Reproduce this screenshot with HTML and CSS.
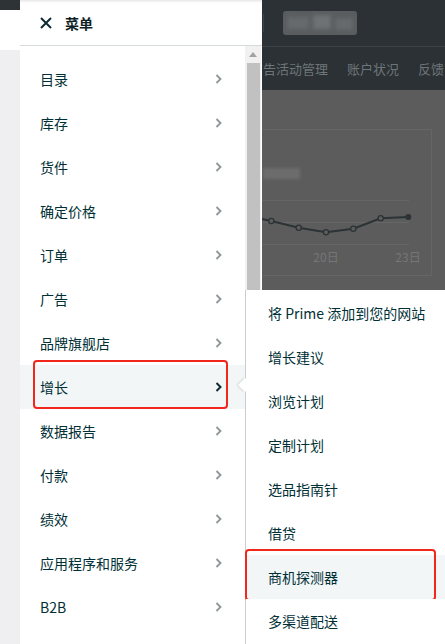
FILE: index.html
```html
<!DOCTYPE html>
<html lang="zh-CN">
<head>
<meta charset="utf-8">
<title>菜单</title>
<link rel="stylesheet" href="styles.css">
</head>
<body>
<div class="page">
  <div class="edge">
    <div class="edge-top"></div>
    <div class="edge-head"></div>
    <div class="edge-body"></div>
  </div>

  <aside class="drawer">
    <div class="drawer-head">
      <svg class="close" width="12" height="12" viewBox="0 0 12 12"><path d="M1 1 L11 11 M11 1 L1 11" stroke="#0f2a33" stroke-width="2" fill="none"/></svg>
      <span class="drawer-title">菜单</span>
    </div>
    <div class="drawer-body">
      <ul class="menu">
        <li class="menu-item"><span>目录</span><svg class="chev" width="7" height="10" viewBox="0 0 7 10"><polyline points="1.5,1 5.5,5 1.5,9"/></svg></li>
        <li class="menu-item"><span>库存</span><svg class="chev" width="7" height="10" viewBox="0 0 7 10"><polyline points="1.5,1 5.5,5 1.5,9"/></svg></li>
        <li class="menu-item"><span>货件</span><svg class="chev" width="7" height="10" viewBox="0 0 7 10"><polyline points="1.5,1 5.5,5 1.5,9"/></svg></li>
        <li class="menu-item"><span>确定价格</span><svg class="chev" width="7" height="10" viewBox="0 0 7 10"><polyline points="1.5,1 5.5,5 1.5,9"/></svg></li>
        <li class="menu-item"><span>订单</span><svg class="chev" width="7" height="10" viewBox="0 0 7 10"><polyline points="1.5,1 5.5,5 1.5,9"/></svg></li>
        <li class="menu-item"><span>广告</span><svg class="chev" width="7" height="10" viewBox="0 0 7 10"><polyline points="1.5,1 5.5,5 1.5,9"/></svg></li>
        <li class="menu-item"><span>品牌旗舰店</span><svg class="chev" width="7" height="10" viewBox="0 0 7 10"><polyline points="1.5,1 5.5,5 1.5,9"/></svg></li>
        <li class="menu-item active"><span>增长</span><svg class="chev" width="7" height="10" viewBox="0 0 7 10"><polyline points="1.5,1 5.5,5 1.5,9"/></svg><span class="mark mark-main"></span></li>
        <li class="menu-item"><span>数据报告</span><svg class="chev" width="7" height="10" viewBox="0 0 7 10"><polyline points="1.5,1 5.5,5 1.5,9"/></svg></li>
        <li class="menu-item"><span>付款</span><svg class="chev" width="7" height="10" viewBox="0 0 7 10"><polyline points="1.5,1 5.5,5 1.5,9"/></svg></li>
        <li class="menu-item"><span>绩效</span><svg class="chev" width="7" height="10" viewBox="0 0 7 10"><polyline points="1.5,1 5.5,5 1.5,9"/></svg></li>
        <li class="menu-item"><span>应用程序和服务</span><svg class="chev" width="7" height="10" viewBox="0 0 7 10"><polyline points="1.5,1 5.5,5 1.5,9"/></svg></li>
        <li class="menu-item"><span>B2B</span><svg class="chev" width="7" height="10" viewBox="0 0 7 10"><polyline points="1.5,1 5.5,5 1.5,9"/></svg></li>
      </ul>
      <div class="scrollbar">
        <div class="sb-arrow"><svg width="8" height="5" viewBox="0 0 8 5"><polygon points="0,5 4,0 8,5" fill="#a3a3a3"/></svg></div>
        <div class="sb-thumb"></div>
      </div>
    </div>
  </aside>

  <main class="backdrop">
    <div class="bd-head">
      <span class="bd-sep"></span>
      <div class="bd-logo"><span class="blob b1"></span><span class="blob b2"></span><span class="blob b3"></span></div>
    </div>
    <nav class="bd-nav">
      <span class="bd-link first">广告活动管理</span>
      <span class="bd-link">账户状况</span>
      <span class="bd-link">反馈</span>
    </nav>
    <div class="bd-content">
      <svg class="chart" width="183" height="554" viewBox="0 0 183 554">
        <defs><filter id="blur" x="-20%" y="-50%" width="140%" height="200%"><feGaussianBlur stdDeviation="1.6"/></filter></defs>
        <rect x="-10" y="39.5" width="179.5" height="146" fill="none" stroke="#656565"/>
        <rect x="1" y="78" width="37" height="11" fill="#6c6c6c" filter="url(#blur)"/>
        <line x1="0" y1="110.5" x2="147" y2="110.5" stroke="#666"/>
        <line x1="0" y1="132.5" x2="147" y2="132.5" stroke="#666"/>
        <line x1="0" y1="154.5" x2="147" y2="154.5" stroke="#666"/>
        <polyline points="-2,128.5 9.3,131 36.7,137.7 64,142.3 91.3,138.7 118.7,128.3 146.3,127" fill="none" stroke="#2c3335" stroke-width="2"/>
        <circle cx="9.3" cy="131" r="2.6" fill="#5c5c5c" stroke="#2c3335" stroke-width="1.3"/>
        <circle cx="36.7" cy="137.7" r="2.6" fill="#5c5c5c" stroke="#2c3335" stroke-width="1.3"/>
        <circle cx="64" cy="142.3" r="2.6" fill="#5c5c5c" stroke="#2c3335" stroke-width="1.3"/>
        <circle cx="91.3" cy="138.7" r="2.6" fill="#5c5c5c" stroke="#2c3335" stroke-width="1.3"/>
        <circle cx="118.7" cy="128.3" r="2.6" fill="#5c5c5c" stroke="#2c3335" stroke-width="1.3"/>
        <circle cx="146.3" cy="127" r="3" fill="#2c3335"/>
        <text x="64" y="172" class="axis">20日</text>
        <text x="146" y="172" class="axis">23日</text>
      </svg>
    </div>
  </main>

  <div class="submenu">
    <span class="caret"></span>
    <ul class="sub-list">
      <li class="sub-item">将 Prime 添加到您的网站</li>
      <li class="sub-item">增长建议</li>
      <li class="sub-item">浏览计划</li>
      <li class="sub-item">定制计划</li>
      <li class="sub-item">选品指南针</li>
      <li class="sub-item">借贷</li>
      <li class="sub-item active">商机探测器<span class="mark mark-sub"></span></li>
      <li class="sub-item">多渠道配送</li>
    </ul>
  </div>
</div>
</body>
</html>
```

FILE: styles.css
```css
* { box-sizing: border-box; }

html, body {
  margin: 0;
  padding: 0;
  width: 445px;
  height: 644px;
  overflow: hidden;
  font-family: "Noto Sans CJK SC", "Noto Sans", "Liberation Sans", sans-serif;
  color: #002f36;
}

.page {
  position: relative;
  display: flex;
  width: 445px;
  height: 644px;
  overflow: hidden;
}

/* left page strip */
.edge {
  width: 20px;
  display: flex;
  flex-direction: column;
  flex-shrink: 0;
}
.edge-top { height: 10px; background: #2e3336; }
.edge-head { height: 40px; background: #ffffff; }
.edge-body { flex: 1; background: #efeff1; }

/* drawer */
.drawer {
  width: 242px;
  flex-shrink: 0;
  background: #ffffff;
  display: flex;
  flex-direction: column;
}
.drawer-head {
  height: 46px;
  border-bottom: 1px solid #d5dbdb;
  display: flex;
  align-items: center;
  gap: 13px;
  padding-left: 20px;
  box-shadow: inset 0 3px 3px -2px rgba(0, 0, 0, 0.12);
}
.close { display: block; }
.drawer-title {
  font-size: 14px;
  font-weight: 700;
  color: #0f1f26;
}

.drawer-body {
  flex: 1;
  display: flex;
}
.menu {
  list-style: none;
  margin: 0;
  padding: 11px 0 0;
  width: 225px;
}
.menu-item {
  position: relative;
  height: 44px;
  display: flex;
  align-items: center;
  justify-content: space-between;
  padding: 0 23px 0 20px;
  font-size: 14px;
}
.menu-item.active { background: #f3f6f6; }

.chev { display: block; }
.chev polyline {
  fill: none;
  stroke: #8d9799;
  stroke-width: 1.8;
}
.menu-item.active .chev polyline { stroke: #0f2a33; stroke-width: 2; }

.mark {
  position: absolute;
  border: 2px solid #f2271c;
  border-radius: 4px;
  pointer-events: none;
}
.mark-main {
  left: 13px;
  top: -5px;
  width: 195px;
  height: 49px;
}

.scrollbar {
  width: 16px;
  background: #f1f1f1;
  display: flex;
  flex-direction: column;
  align-items: center;
}
.sb-arrow {
  height: 17px;
  display: flex;
  align-items: center;
  justify-content: center;
}
.sb-arrow svg { display: block; }
.sb-thumb {
  width: 13px;
  height: 300px;
  background: #c1c1c1;
}

/* backdrop page */
.backdrop {
  flex: 1;
  background: #5c5c5c;
  display: flex;
  flex-direction: column;
  overflow: hidden;
}
.bd-head {
  height: 47px;
  flex-shrink: 0;
  background: #2b3135;
  border-bottom: 1px solid #3d4447;
  display: flex;
  align-items: center;
}
.bd-sep {
  width: 1px;
  height: 18px;
  margin-left: 1px;
  background: #3c4346;
}
.bd-logo {
  position: relative;
  margin-left: 19px;
  width: 74px;
  height: 24px;
  border-radius: 3px;
  background: #595d5f;
  overflow: hidden;
}
.blob {
  position: absolute;
  background: #666a6c;
  filter: blur(2px);
}
.b1 { left: 4px; top: 6px; width: 22px; height: 12px; }
.b2 { left: 30px; top: 4px; width: 18px; height: 14px; background: #6e7274; }
.b3 { left: 52px; top: 7px; width: 18px; height: 12px; }

.bd-nav {
  height: 43px;
  flex-shrink: 0;
  background: #2b3135;
  display: flex;
  align-items: center;
  gap: 19px;
  white-space: nowrap;
  font-size: 13px;
  color: #6e7578;
}
.bd-link.first { margin-left: -12px; }

.bd-content { flex: 1; }
.chart { display: block; }
.axis {
  font-family: "Noto Sans CJK SC", "Noto Sans", sans-serif;
  font-size: 12px;
  fill: #767676;
  text-anchor: middle;
}

/* flyout submenu */
.submenu {
  position: absolute;
  left: 245px;
  top: 290px;
  width: 200px;
  height: 354px;
  background: #ffffff;
  border-left: 1px solid #c9cdcd;
  padding-top: 1px;
}
.caret {
  position: absolute;
  left: -6px;
  top: 90px;
  width: 10px;
  height: 10px;
  background: #ffffff;
  transform: rotate(45deg);
  box-shadow: -1px 1px 2px rgba(0, 0, 0, 0.12);
}
.sub-list {
  position: relative;
  list-style: none;
  margin: 0;
  padding: 0;
}
.sub-item {
  position: relative;
  height: 44px;
  display: flex;
  align-items: center;
  padding-left: 22px;
  font-size: 14px;
  background: #ffffff;
}
.sub-item.active { background: #f3f6f6; }
.mark-sub {
  left: -1px;
  top: -6px;
  width: 191px;
  height: 52px;
}
```
